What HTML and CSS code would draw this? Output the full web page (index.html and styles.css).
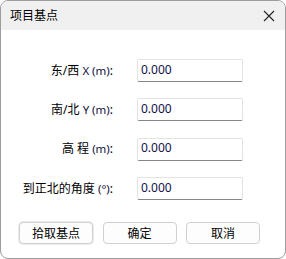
FILE: index.html
```html
<!DOCTYPE html>
<html lang="zh-CN">
<head>
  <meta charset="UTF-8">
  <meta name="viewport" content="width=device-width, initial-scale=1.0">
  <title>项目基点</title>
  <link rel="stylesheet" href="styles.css">
</head>
<body>
  <div class="dialog">
    <div class="titlebar">
      <span class="title">项目基点</span>
      <svg class="close" width="12" height="12" viewBox="0 0 12 12">
        <path d="M1 1L11 11M11 1L1 11" stroke="#222" stroke-width="1.1" fill="none"/>
      </svg>
    </div>
    <div class="content">
      <div class="form">
        <label>东/西 <span class="lat">X (m)</span>:</label>
        <input class="field" type="text" value="0.000">
        <label>南/北 <span class="lat">Y (m)</span>:</label>
        <input class="field" type="text" value="0.000">
        <label>高 程 <span class="lat">(m)</span>:</label>
        <input class="field" type="text" value="0.000">
        <label>到正北的角度 <span class="lat">(°)</span>:</label>
        <input class="field" type="text" value="0.000">
      </div>
      <div class="buttons">
        <button class="btn default">拾取基点</button>
        <button class="btn">确定</button>
        <button class="btn">取消</button>
      </div>
    </div>
  </div>
</body>
</html>
```
FILE: styles.css
```css
*{margin:0;padding:0;box-sizing:border-box;}
html,body{width:100%;height:100%;overflow:hidden;background:#fff;}
body{font:12px "Noto Sans","Noto Sans CJK SC",sans-serif;color:#000;}
.dialog{width:286px;height:259px;border:1px solid #9c9c9c;border-radius:8px;overflow:hidden;background:#fff;display:flex;flex-direction:column;}
.titlebar{height:29px;background:#f0f0f0;display:flex;align-items:center;justify-content:space-between;padding:0 10px 0 9px;}
.title{font-size:12px;line-height:1;}
.close{display:block;}
.content{flex:1;}
.form{display:grid;grid-template-columns:112px 106px;column-gap:24px;row-gap:16.4px;padding-top:29px;align-items:center;}
.form label{text-align:right;line-height:1;white-space:nowrap;}
.lat{font-size:11.5px;color:#101040;}
.field{height:23px;border:1px solid #e3e3e3;border-bottom-color:#868686;border-radius:2px;padding:0 3px 3px;font:12px "Noto Sans",sans-serif;color:#10104a;outline:none;background:#fff;}
.buttons{display:flex;gap:9.5px;padding:22px 0 0 18px;}
.btn{width:74px;height:22px;border:1px solid #d0d0d0;border-radius:4px;background:#fdfdfd;font:12px "Noto Sans","Noto Sans CJK SC",sans-serif;color:#000;}
.btn.default{box-shadow:0 0 0 1px #ececec;}
```
